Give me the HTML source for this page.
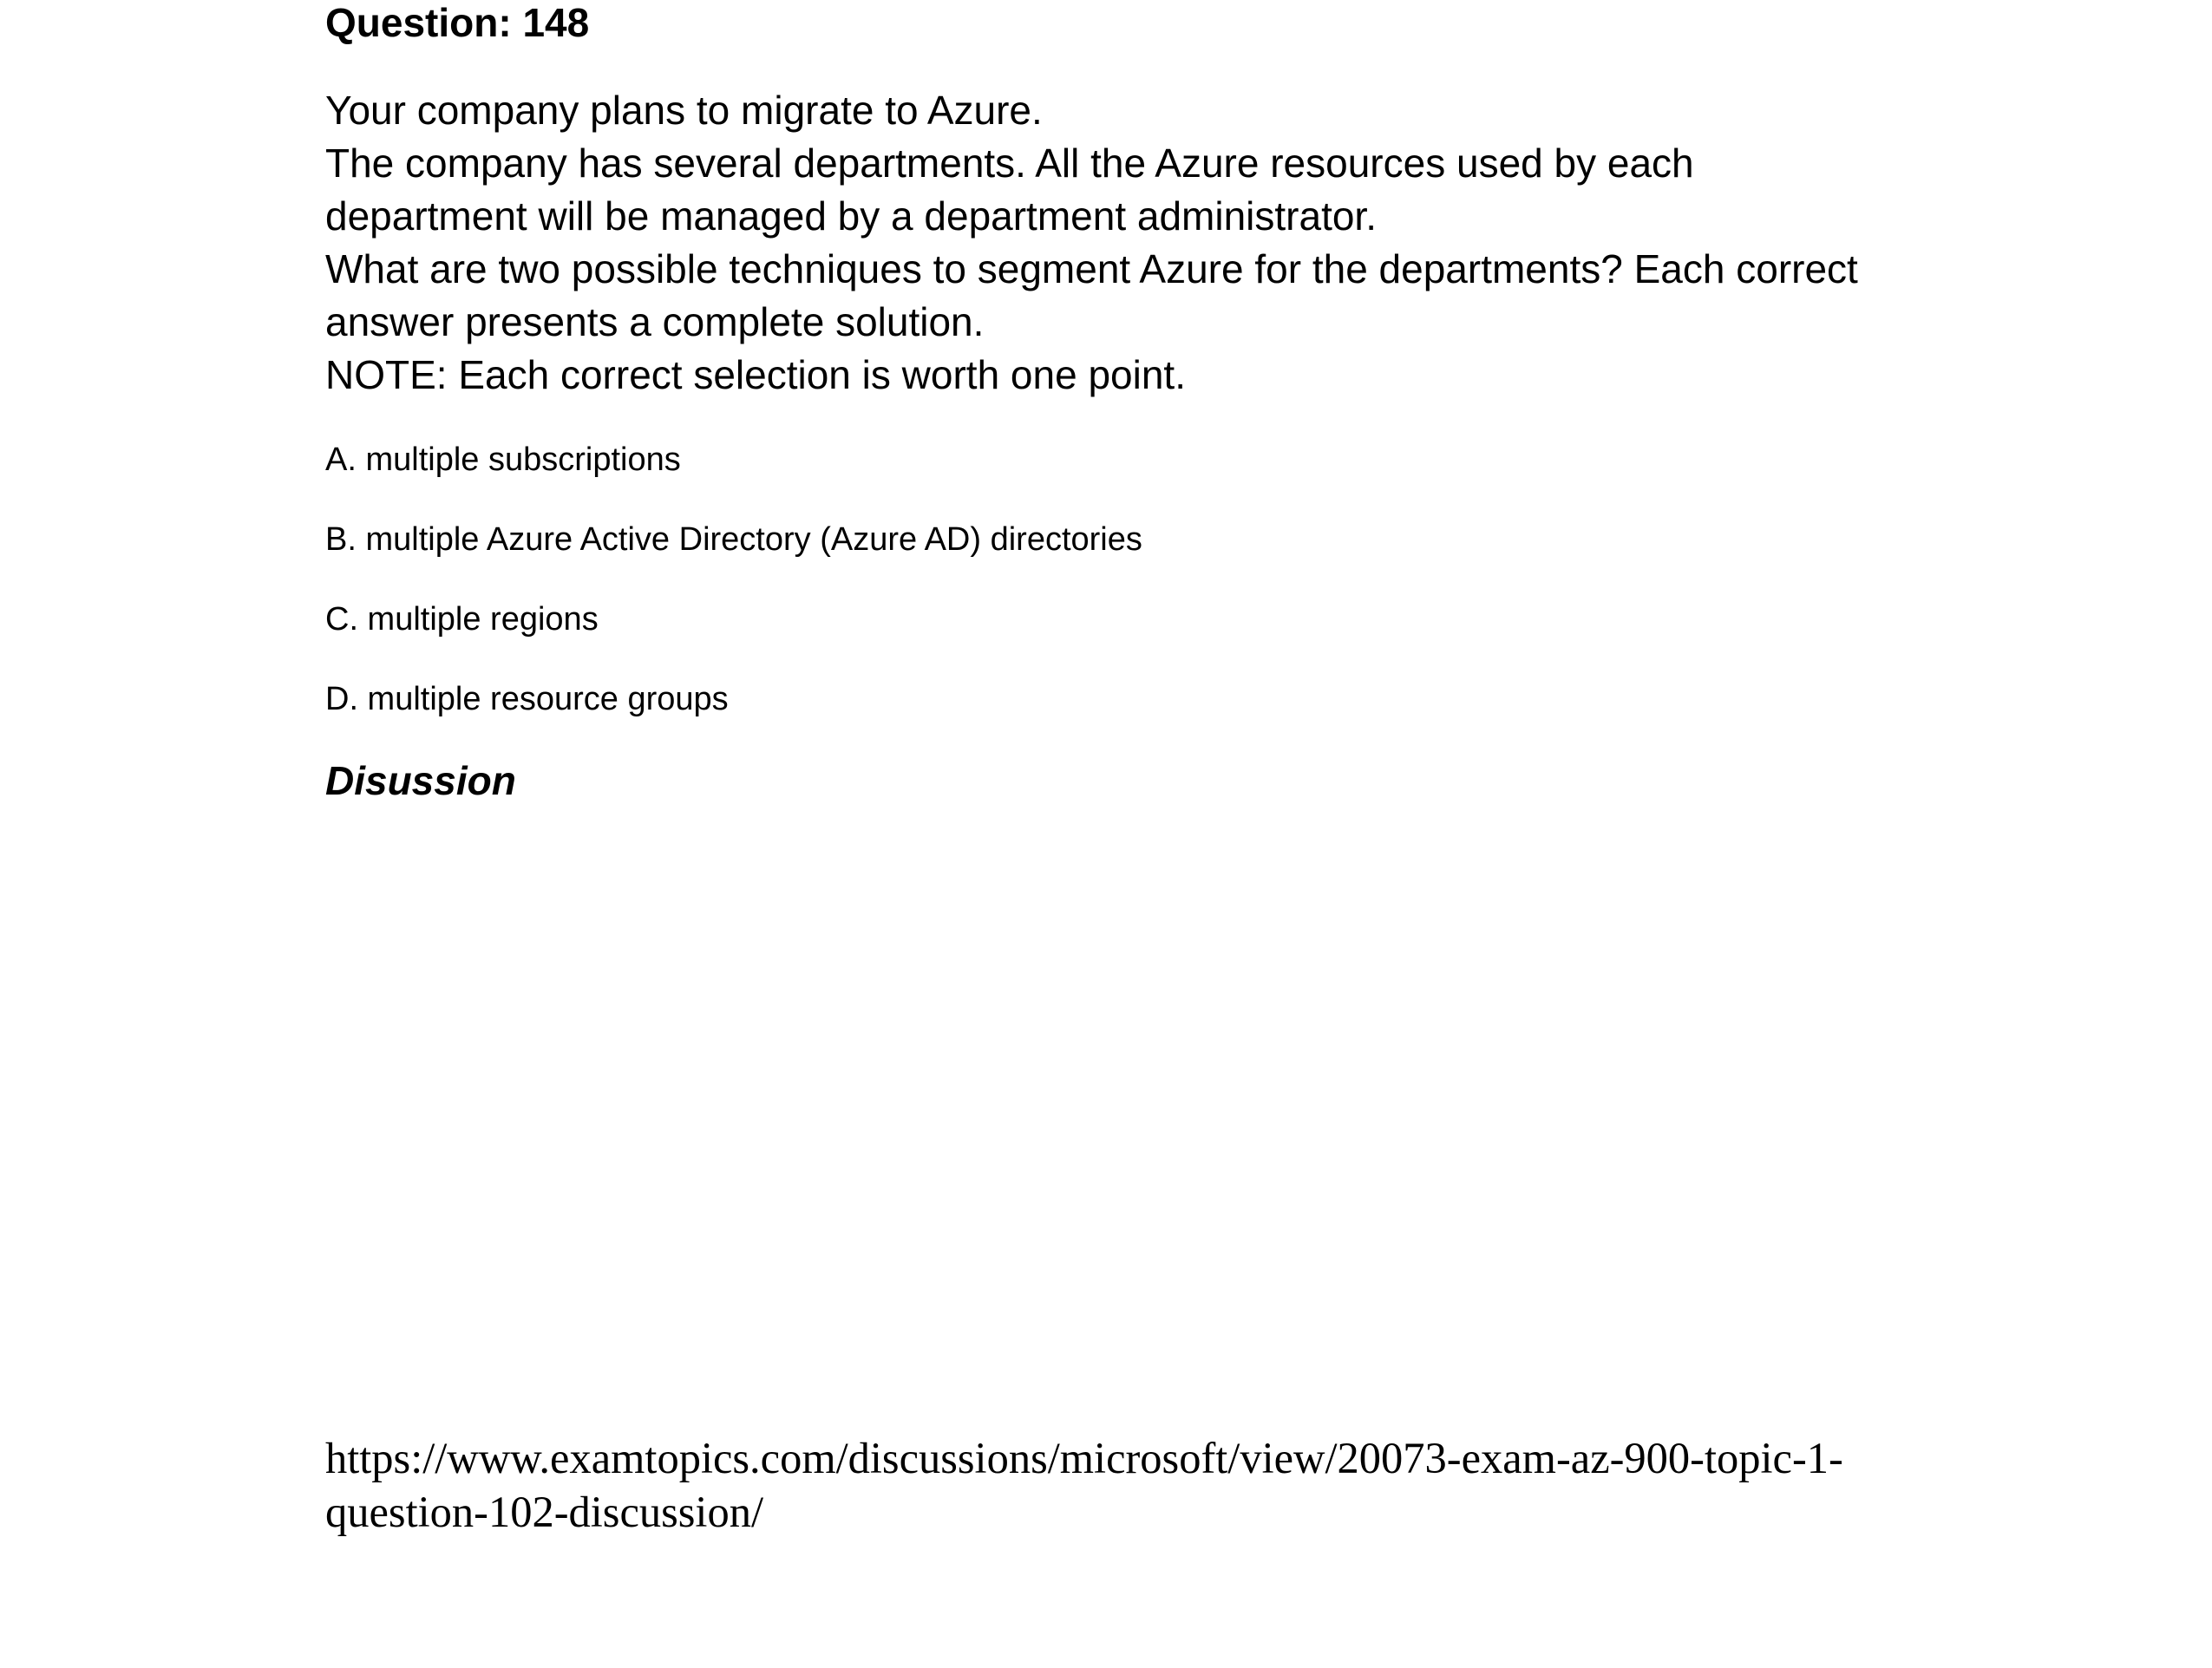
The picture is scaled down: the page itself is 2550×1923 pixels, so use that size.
<!DOCTYPE html>
<html><head><meta charset="utf-8"><style>
body{margin:0;width:2550px;height:1923px;background:#fff;position:relative;overflow:hidden;color:#000}
div{position:absolute;left:375px;white-space:nowrap}
.s{font-family:"Liberation Sans",Arial,sans-serif}
</style></head><body>
<div class="s" style="top:3px;font-size:46px;line-height:46px;font-weight:bold">Question: 148</div>
<div class="s" style="top:97px;font-size:46px;line-height:61px">Your company plans to migrate to Azure.<br>The company has several departments. All the Azure resources used by each<br>department will be managed by a department administrator.<br>What are two possible techniques to segment Azure for the departments? Each correct<br>answer presents a complete solution.<br>NOTE: Each correct selection is worth one point.</div>
<div class="s" style="top:511px;font-size:38px;line-height:38px">A. multiple subscriptions</div>
<div class="s" style="top:603px;font-size:38px;line-height:38px">B. multiple Azure Active Directory (Azure AD) directories</div>
<div class="s" style="top:695px;font-size:38px;line-height:38px">C. multiple regions</div>
<div class="s" style="top:787px;font-size:38px;line-height:38px">D. multiple resource groups</div>
<div class="s" style="top:877px;font-size:46px;line-height:46px;font-weight:bold;font-style:italic">Disussion</div>
<div style="top:1650px;font-family:'Liberation Serif',serif;font-size:50.5px;line-height:62px">https://www.examtopics.com/discussions/microsoft/view/20073-exam-az-900-topic-1-<br>question-102-discussion/</div>
</body></html>
